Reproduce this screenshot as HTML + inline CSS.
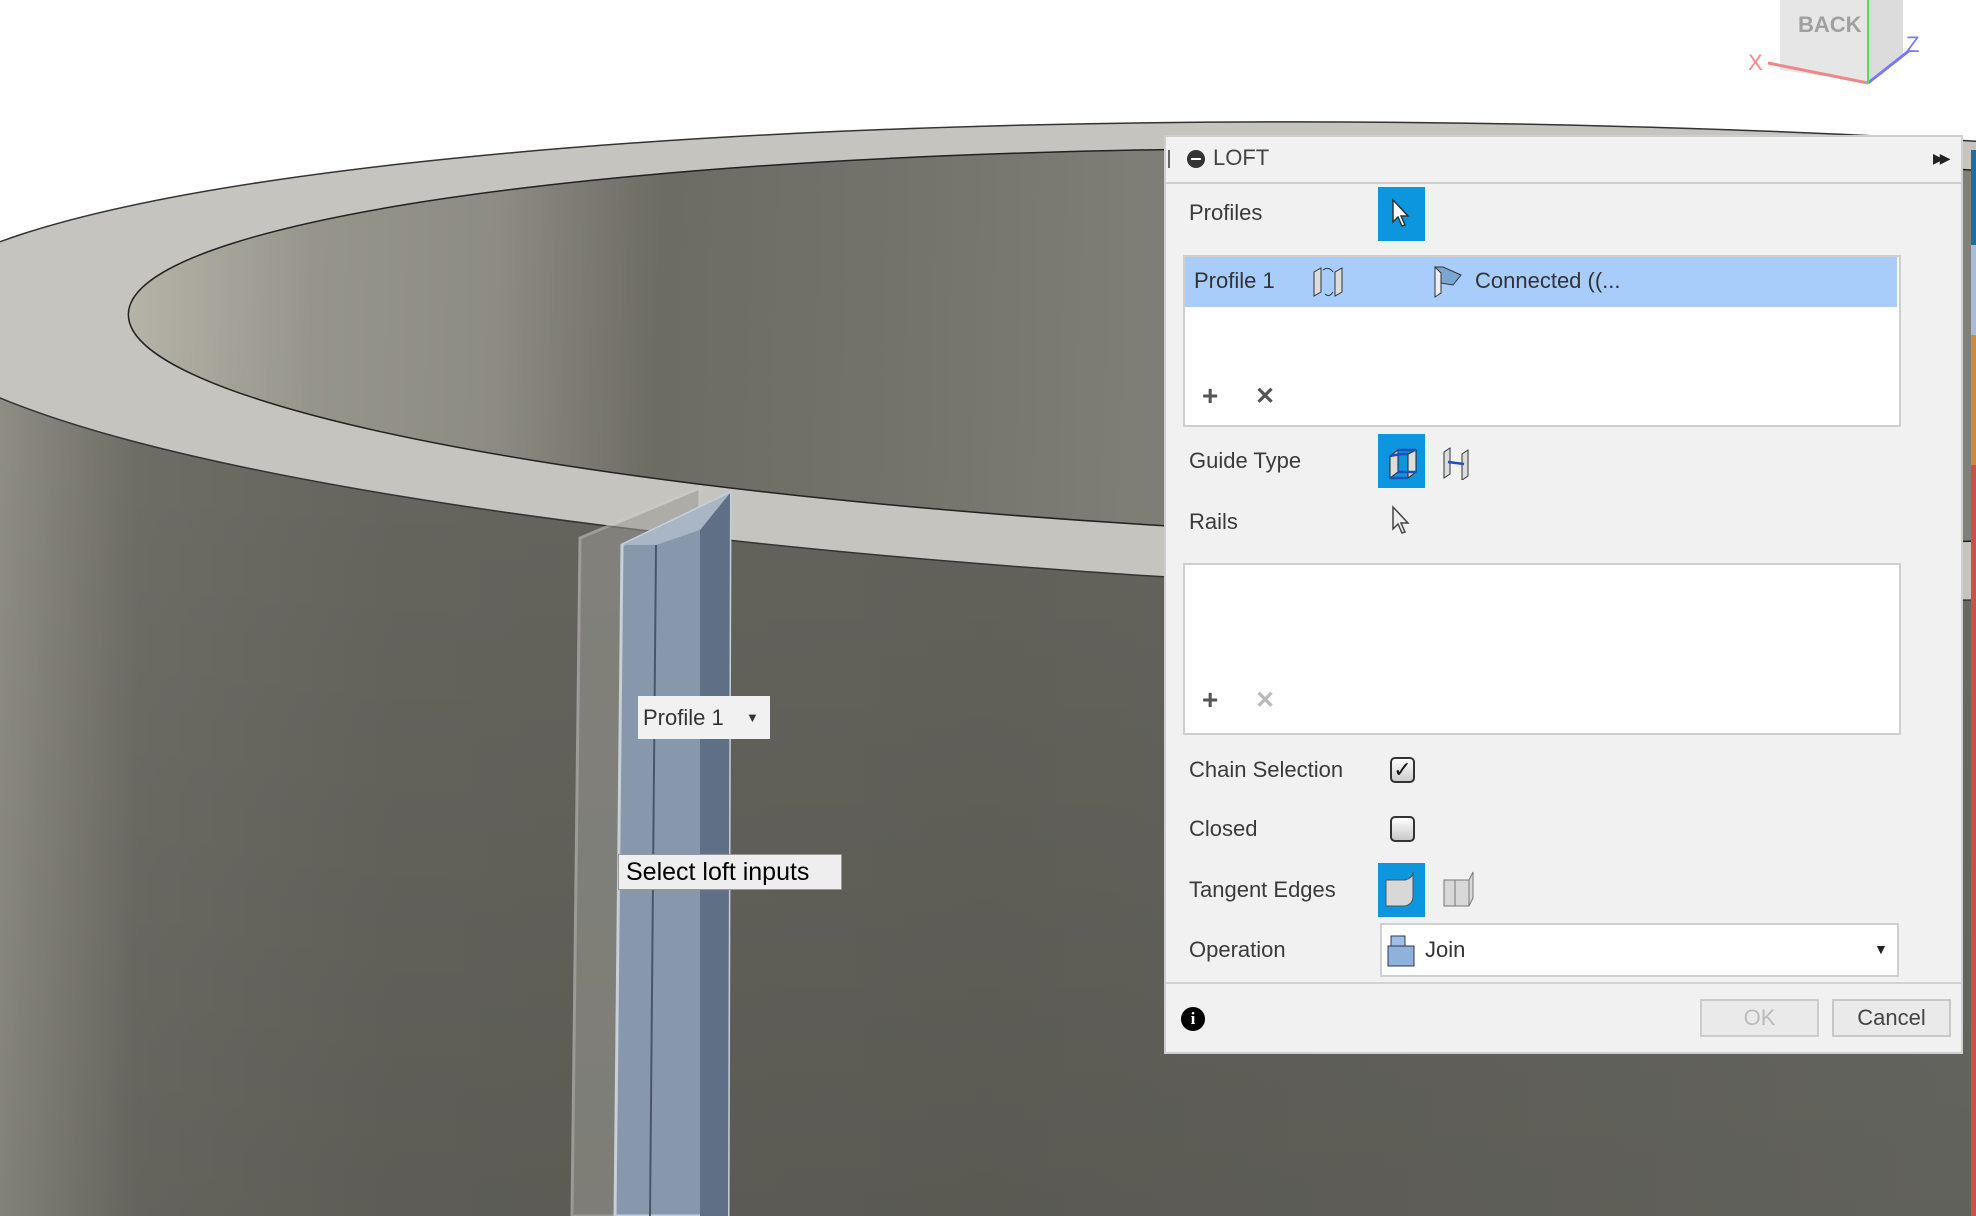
<!DOCTYPE html>
<html><head><meta charset="utf-8">
<style>
*{box-sizing:border-box;margin:0;padding:0}
body{width:1976px;height:1216px;overflow:hidden;position:relative;background:#fff;font-family:"Liberation Sans",Arial,sans-serif;}
.abs{position:absolute}
.lbl{position:absolute;left:1189px;font-size:22px;color:#3a3a3a;transform:translateY(-50%)}
.panel{position:absolute;left:1164px;top:135px;width:799px;height:919px;background:#f1f1f1;border:2px solid #cfcfcf}
.box{position:absolute;background:#fff;border:2px solid #cfcfcf}
.bbtn{position:absolute;background:#0c96dd;width:47px;height:54px}
</style></head><body>
<svg class="abs" style="left:0;top:0" width="1976" height="1216" viewBox="0 0 1976 1216">
<defs>
<linearGradient id="wall" x1="0" x2="1976" y1="0" y2="0" gradientUnits="userSpaceOnUse">
<stop offset="0" stop-color="#908f87"/><stop offset="0.07" stop-color="#6f6e67"/><stop offset="0.2" stop-color="#67665f"/><stop offset="0.5" stop-color="#64635c"/><stop offset="1" stop-color="#6c6c66"/></linearGradient>
<linearGradient id="wallv" x1="0" x2="0" y1="0" y2="1"><stop offset="0" stop-color="#000" stop-opacity="0"/><stop offset="1" stop-color="#000" stop-opacity="0.1"/></linearGradient>
<linearGradient id="hole" x1="128" x2="1960" y1="0" y2="0" gradientUnits="userSpaceOnUse">
<stop offset="0" stop-color="#b6b4a8"/><stop offset="0.1" stop-color="#96958c"/><stop offset="0.2" stop-color="#8d8c84"/><stop offset="0.29" stop-color="#6c6b64"/><stop offset="0.42" stop-color="#73736c"/><stop offset="0.55" stop-color="#7e7e77"/><stop offset="1" stop-color="#80807a"/></linearGradient>
</defs>
<rect x="0" y="0" width="1976" height="1216" fill="#fff"/>
<rect x="0" y="300" width="1976" height="916" fill="url(#wall)"/>
<rect x="0" y="300" width="1976" height="916" fill="url(#wallv)"/>
<g transform="rotate(1.5 1603 361)">
<ellipse cx="1603" cy="361" rx="1700" ry="235" fill="#c5c4be" stroke="#333" stroke-width="1.5"/>
</g>
<g transform="rotate(1.3 1538 346)">
<ellipse cx="1538" cy="346" rx="1410" ry="195" fill="url(#hole)" stroke="#222" stroke-width="1.5"/>
</g>
<!-- strips -->
<polygon points="580,538 700,488 700,1216 572,1216" fill="#9a9a94" opacity="0.55" stroke="#ccc" stroke-width="3"/>
<polygon points="622,545 730,493 728,1216 615,1216" fill="#8798ad" stroke="#c8cfd8" stroke-width="3"/>
<polygon points="700,530 730,493 728,1216 700,1216" fill="#5f6f85"/>
<polygon points="622,545 730,493 700,530 656,545" fill="#a9b6c6"/>
<line x1="656" y1="545" x2="650" y2="1216" stroke="#4a5668" stroke-width="2"/>
<!-- view cube -->
<polygon points="1780,0 1868,0 1868,82 1780,70" fill="#e6e6e6"/>
<polygon points="1868,0 1903,0 1903,55 1868,82" fill="#dcdcdc"/>
<text x="1798" y="32" font-size="22" font-weight="bold" fill="#a0a0a0" font-family="Liberation Sans">BACK</text>
<line x1="1768" y1="63" x2="1868" y2="83" stroke="#e88" stroke-width="3"/>
<line x1="1868" y1="83" x2="1910" y2="50" stroke="#77f" stroke-width="3"/>
<line x1="1868" y1="0" x2="1868" y2="83" stroke="#5d5" stroke-width="2"/>
<text x="1748" y="70" font-size="22" fill="#f88">X</text>
<text x="1906" y="52" font-size="22" fill="#77f">Z</text>
<!-- right strip -->
<rect x="1971" y="150" width="5" height="95" fill="#1f6c9f"/>
<rect x="1971" y="245" width="5" height="90" fill="#a8bdd3"/>
<rect x="1971" y="335" width="5" height="130" fill="#d08a3a"/>
<rect x="1971" y="465" width="5" height="751" fill="#c7543e"/>
</svg>

<div class="abs" style="left:638px;top:696px;width:132px;height:43px;background:#f1f1f1;font-size:22px;color:#333;line-height:43px;padding-left:5px">Profile 1<span style="position:absolute;left:108px;top:0;font-size:13px">▼</span></div>
<div class="abs" style="left:618px;top:854px;width:224px;height:36px;background:#eee;border:1px solid #999;font-size:25px;color:#000;line-height:34px;padding-left:7px">Select loft inputs</div>

<div class="panel">
 <div class="abs" style="left:0;top:0;width:795px;height:47px;border-bottom:2px solid #cfcfcf"></div>
</div>
<div class="abs" style="left:1168px;top:150px;width:2px;height:18px;background:#666"></div>
<div class="abs" style="left:1187px;top:150px;width:18px;height:18px;border-radius:50%;background:#333"></div>
<div class="abs" style="left:1191px;top:158px;width:10px;height:2px;background:#fff"></div>
<div class="abs" style="left:1213px;top:145px;font-size:22px;color:#444">LOFT</div>
<div class="abs" style="left:1933px;top:150px;font-size:14px;color:#222;letter-spacing:-4px">▶▶</div>

<div class="lbl" style="top:213px">Profiles</div>
<div class="bbtn" style="left:1378px;top:187px"></div>
<svg class="abs" style="left:1390px;top:198px" width="24" height="32" viewBox="0 0 24 32"><path d="M3 2 L3 24 L8 19 L12 28 L15 27 L11 18 L18 18 Z" fill="#fff" stroke="#333" stroke-width="1.5"/></svg>

<div class="box" style="left:1183px;top:255px;width:718px;height:172px"></div>
<div class="abs" style="left:1185px;top:257px;width:712px;height:50px;background:#a8cdfa"></div>
<div class="abs" style="left:1194px;top:268px;font-size:22px;color:#333">Profile 1</div>
<svg class="abs" style="left:1311px;top:264px" width="36" height="36" viewBox="0 0 36 36"><polygon points="3,8 10,4 10,28 3,32" fill="#ddd" stroke="#333"/><polygon points="24,8 31,4 31,28 24,32" fill="#ddd" stroke="#333"/><path d="M12 6 Q18 2 22 8 M14 30 Q18 34 22 28" fill="none" stroke="#333"/></svg>
<svg class="abs" style="left:1433px;top:265px" width="34" height="34" viewBox="0 0 34 34"><polygon points="2,2 10,2 28,10 20,20 8,18 2,32" fill="#7aa7d1" stroke="#333"/><polygon points="2,2 8,8 8,28 2,32" fill="#eee" stroke="#333"/></svg>
<div class="abs" style="left:1475px;top:268px;font-size:22px;color:#333">Connected ((...</div>
<div class="abs" style="left:1202px;top:380px;font-size:28px;color:#555;font-weight:bold">+</div>
<div class="abs" style="left:1255px;top:382px;font-size:24px;color:#555;font-weight:bold">✕</div>

<div class="lbl" style="top:461px">Guide Type</div>
<div class="bbtn" style="left:1378px;top:434px"></div>
<svg class="abs" style="left:1384px;top:444px" width="36" height="36" viewBox="0 0 36 36"><polygon points="6,12 14,6 14,28 6,34" fill="#ddd" stroke="#222"/><polygon points="24,10 32,6 32,28 24,34" fill="#ddd" stroke="#222"/><path d="M14 6 L32 6 M6 34 L24 34 M6 12 Q14 10 24 10 M14 28 L32 28" stroke="#1d4fbf" stroke-width="2.5" fill="none"/></svg>
<svg class="abs" style="left:1440px;top:444px" width="36" height="36" viewBox="0 0 36 36"><polygon points="4,8 10,4 10,30 4,34" fill="#ddd" stroke="#333"/><polygon points="22,10 28,6 28,32 22,36" fill="#ddd" stroke="#333"/><path d="M8 18 L24 20" stroke="#1d4fbf" stroke-width="2.5"/></svg>

<div class="lbl" style="top:522px">Rails</div>
<svg class="abs" style="left:1390px;top:505px" width="24" height="34" viewBox="0 0 24 34"><path d="M3 2 L3 24 L8 19 L12 28 L15 27 L11 18 L18 18 Z" fill="#eee" stroke="#444" stroke-width="1.5"/></svg>

<div class="box" style="left:1183px;top:563px;width:718px;height:172px"></div>
<div class="abs" style="left:1202px;top:684px;font-size:28px;color:#555;font-weight:bold">+</div>
<div class="abs" style="left:1255px;top:686px;font-size:24px;color:#bbb;font-weight:bold">✕</div>

<div class="lbl" style="top:770px">Chain Selection</div>
<div class="abs" style="left:1390px;top:757px;width:25px;height:26px;border:2px solid #333;border-radius:5px;background:linear-gradient(#fff,#ccc);font-size:22px;line-height:22px;text-align:center;color:#111">✓</div>
<div class="lbl" style="top:829px">Closed</div>
<div class="abs" style="left:1390px;top:816px;width:25px;height:26px;border:2px solid #333;border-radius:5px;background:linear-gradient(#fff,#c8c8c8)"></div>

<div class="lbl" style="top:890px">Tangent Edges</div>
<div class="bbtn" style="left:1378px;top:863px"></div>
<svg class="abs" style="left:1383px;top:870px" width="36" height="40" viewBox="0 0 36 40"><path d="M3 10 L22 10 Q30 8 30 2 L30 26 Q30 34 22 36 L3 36 Z" fill="#d8d8d8" stroke="#555"/></svg>
<svg class="abs" style="left:1441px;top:870px" width="36" height="40" viewBox="0 0 36 40"><path d="M3 10 L28 10 L32 2 L32 28 L28 36 L3 36 Z" fill="#d8d8d8" stroke="#777"/><line x1="14" y1="10" x2="14" y2="36" stroke="#777"/><line x1="28" y1="10" x2="28" y2="36" stroke="#777"/></svg>

<div class="lbl" style="top:950px">Operation</div>
<div class="box" style="left:1380px;top:923px;width:519px;height:54px"></div>
<svg class="abs" style="left:1386px;top:934px" width="30" height="36" viewBox="0 0 30 36"><rect x="5" y="2" width="14" height="18" fill="#9ec0e6" stroke="#335"/><rect x="2" y="12" width="26" height="20" fill="#8fb2da" stroke="#335"/></svg>
<div class="abs" style="left:1425px;top:937px;font-size:22px;color:#333">Join</div>
<div class="abs" style="left:1874px;top:941px;font-size:14px;color:#222">▼</div>

<div class="abs" style="left:1166px;top:982px;width:795px;height:2px;background:#d2d2d2"></div>
<div class="abs" style="left:1181px;top:1007px;width:24px;height:24px;border-radius:50%;background:#000;color:#fff;font-size:17px;font-weight:bold;text-align:center;line-height:24px;font-family:'Liberation Serif',serif">i</div>
<div class="abs" style="left:1700px;top:999px;width:119px;height:38px;border:2px solid #ccc;background:#eaeaea;color:#bbb;font-size:22px;text-align:center;line-height:34px">OK</div>
<div class="abs" style="left:1832px;top:999px;width:119px;height:38px;border:2px solid #c8c8c8;background:#eaeaea;color:#444;font-size:22px;text-align:center;line-height:34px">Cancel</div>
</body></html>
